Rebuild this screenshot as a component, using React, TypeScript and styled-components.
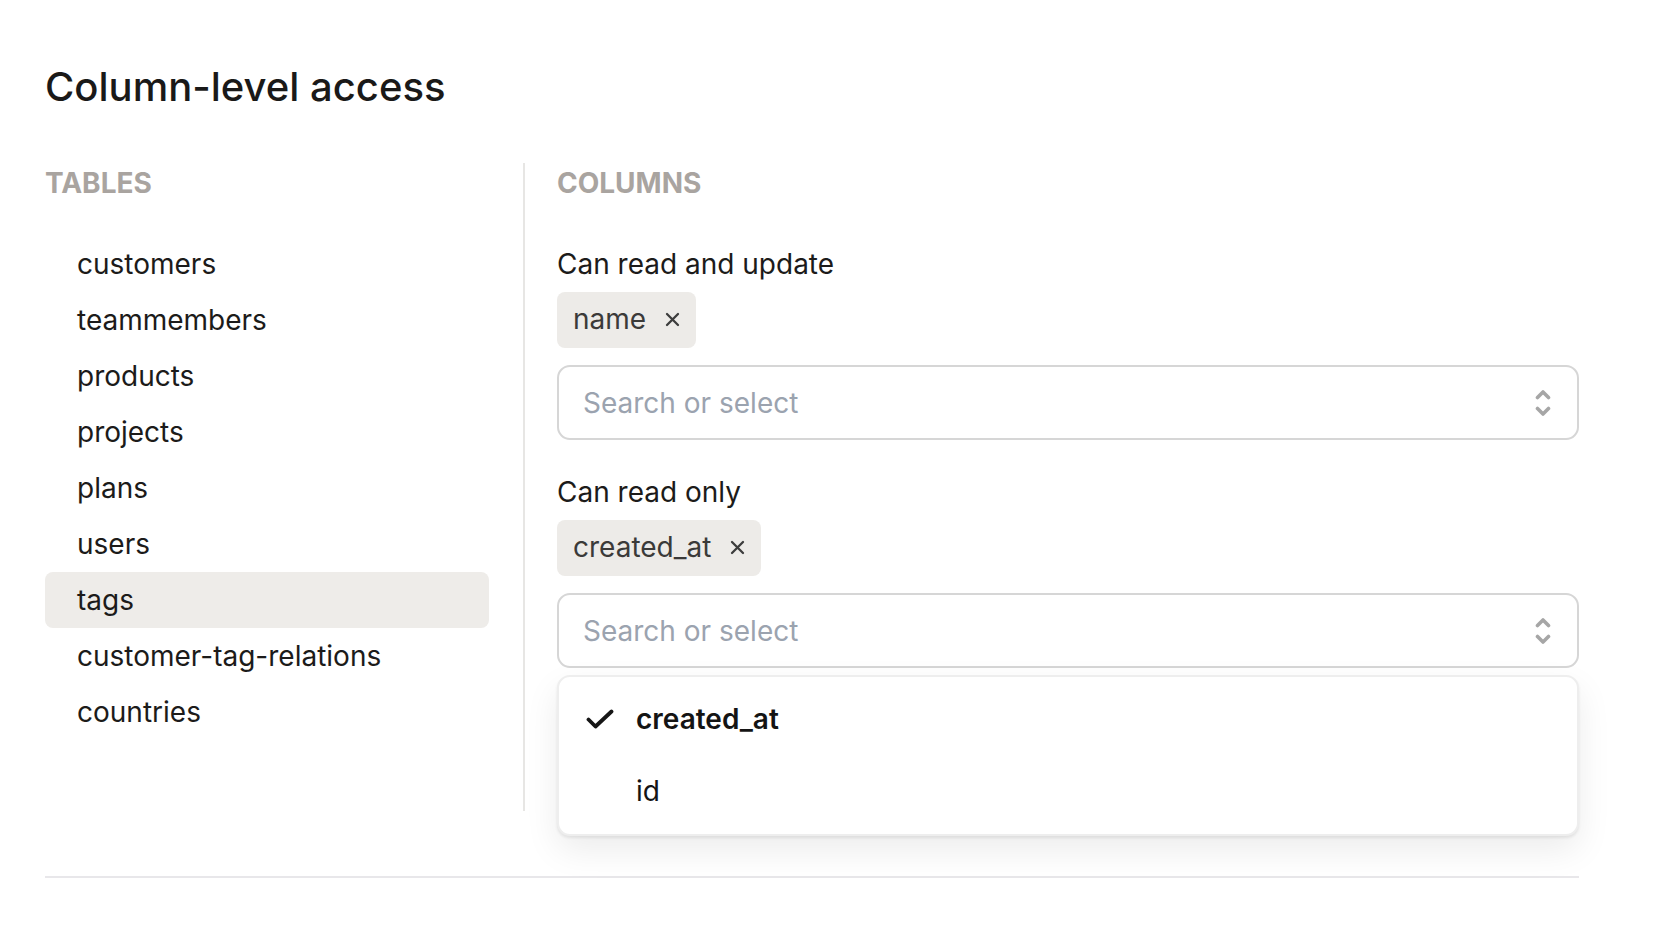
import React, { FC } from "react";
import styled, { createGlobalStyle } from "styled-components";

const TABLES = [
  "customers",
  "teammembers",
  "products",
  "projects",
  "plans",
  "users",
  "tags",
  "customer-tag-relations",
  "countries",
];

const SELECTED_TABLE = "tags";

const GlobalStyle = createGlobalStyle`
  * {
    box-sizing: border-box;
  }

  body {
    margin: 0;
    background: #fff;
    font-family: Inter, "Noto Sans", sans-serif;
    color: #1c1b1a;
  }
`;

const ChevronsIcon: FC = () => (
  <svg width="16" height="28" viewBox="0 0 16 28" fill="none">
    <path
      d="M2.5 8.5 8 3l5.5 5.5M2.5 19.5 8 25l5.5-5.5"
      stroke="#a6a6a6"
      strokeWidth="3.6"
      strokeLinecap="round"
      strokeLinejoin="round"
    />
  </svg>
);

const CloseIcon: FC = () => (
  <svg width="15" height="15" viewBox="0 0 15 15" fill="none">
    <path
      d="M2 2l11 11M13 2 2 13"
      stroke="#3d3d3d"
      strokeWidth="2.3"
      strokeLinecap="round"
    />
  </svg>
);

const CheckIcon: FC = () => (
  <svg width="28" height="20" viewBox="0 0 28 20" fill="none">
    <path
      d="M2.5 10.5 9.5 17.5 25.5 2.5"
      stroke="#161616"
      strokeWidth="3.8"
      strokeLinecap="round"
      strokeLinejoin="round"
    />
  </svg>
);

interface FieldProps {
  label: string;
  chip: string;
  children?: React.ReactNode;
}

const Field: FC<FieldProps> = ({ label, chip, children }) => (
  <FieldBlock>
    <FieldLabel>{label}</FieldLabel>
    <ChipRow>
      <Chip>
        {chip}
        <CloseIcon />
      </Chip>
    </ChipRow>
    <SelectBox>
      <Placeholder>Search or select</Placeholder>
      <ChevronsIcon />
    </SelectBox>
    {children}
  </FieldBlock>
);

const App: FC = () => {
  return (
    <>
      <GlobalStyle />
      <Page>
        <Title>Column-level access</Title>

        <Columns>
          <Sidebar>
            <SectionLabel>Tables</SectionLabel>
            <TableList>
              {TABLES.map((table) => (
                <TableItem key={table} active={table === SELECTED_TABLE}>
                  {table}
                </TableItem>
              ))}
            </TableList>
          </Sidebar>

          <Main>
            <SectionLabel>Columns</SectionLabel>
            <Fields>
              <Field label="Can read and update" chip="name" />
              <Field label="Can read only" chip="created_at">
                <Dropdown>
                  <Option selected>
                    <CheckSlot>
                      <CheckIcon />
                    </CheckSlot>
                    created_at
                  </Option>
                  <Option>
                    <CheckSlot />
                    id
                  </Option>
                </Dropdown>
              </Field>
            </Fields>
          </Main>
        </Columns>

        <Rule />
      </Page>
    </>
  );
};

const Page = styled.div`
  width: 1534px;
  margin-left: 45px;
  padding-top: 61px;
`;

const Title = styled.h1`
  margin: 0 0 50px;
  font-size: 40px;
  line-height: 52px;
  font-weight: 500;
  color: #1a1918;
`;

const Columns = styled.div`
  display: grid;
  grid-template-columns: 480px 1fr;
  height: 648px;
`;

const Sidebar = styled.div`
  padding-right: 34px;
  border-right: 2px solid #e7e6e4;
`;

const Main = styled.div`
  padding-left: 32px;
`;

const SectionLabel = styled.div`
  font-size: 28px;
  line-height: 40px;
  font-weight: 700;
  text-transform: uppercase;
  color: #a9a4a0;
`;

const TableList = styled.div`
  margin-top: 33px;
  display: flex;
  flex-direction: column;
`;

const TableItem = styled.div<{ active?: boolean }>`
  height: 56px;
  display: flex;
  align-items: center;
  padding-left: 32px;
  border-radius: 8px;
  font-size: 28px;
  color: #1c1b1a;
  background: ${({ active }) => (active ? "#eeece9" : "transparent")};
`;

const Fields = styled.div`
  margin-top: 40px;
  display: flex;
  flex-direction: column;
  gap: 31px;
`;

const FieldBlock = styled.div`
  position: relative;
`;

const FieldLabel = styled.div`
  font-size: 28px;
  line-height: 40px;
  padding-top: 1px;
  color: #1c1b1a;
`;

const ChipRow = styled.div`
  margin-top: 8px;
  display: flex;
  gap: 10px;
`;

const Chip = styled.div`
  height: 56px;
  display: inline-flex;
  align-items: center;
  gap: 19px;
  padding: 0 16px 2px;
  border-radius: 8px;
  background: #edebe8;
  font-size: 28px;
  color: #3b3a39;
`;

const SelectBox = styled.div`
  margin-top: 17px;
  height: 75px;
  display: flex;
  align-items: center;
  justify-content: space-between;
  padding: 0 26px 0 24px;
  border: 2px solid #d6d6d6;
  border-radius: 13px;
  background: #fff;
`;

const Placeholder = styled.span`
  font-size: 28px;
  color: #9ba3af;
`;

const Dropdown = styled.div`
  position: absolute;
  top: calc(100% + 7px);
  left: 0;
  right: 0;
  padding: 7px 0 6px;
  background: #fff;
  border: 2px solid #eeeeee;
  border-radius: 13px;
  box-shadow: 0 2px 3px rgba(0, 0, 0, 0.08), 0 14px 34px rgba(0, 0, 0, 0.08);
  z-index: 10;
`;

const Option = styled.div<{ selected?: boolean }>`
  height: 72px;
  display: flex;
  align-items: center;
  padding-left: 27px;
  padding-bottom: 2px;
  font-size: 28px;
  font-weight: ${({ selected }) => (selected ? 600 : 400)};
  color: #141414;
`;

const CheckSlot = styled.span`
  width: 28px;
  margin-right: 22px;
  display: flex;
  align-items: center;
`;

const Rule = styled.div`
  margin-top: 65px;
  height: 2px;
  background: #e8e7ea;
`;

export default App;
